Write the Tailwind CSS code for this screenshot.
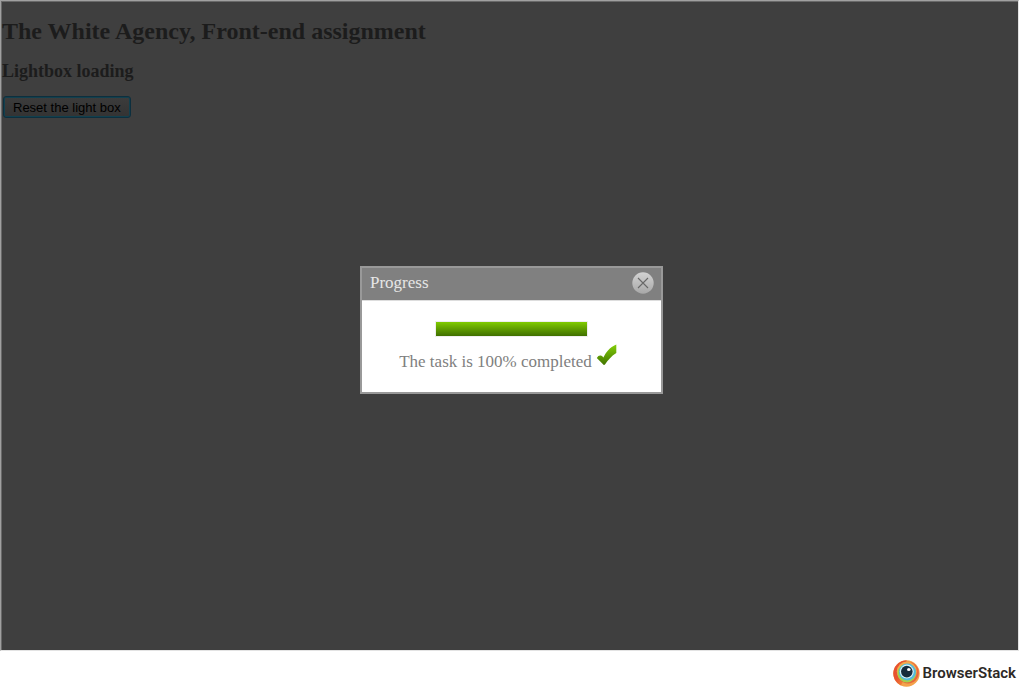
<!DOCTYPE html>
<html lang="en">
<head>
<meta charset="utf-8">
<title>The White Agency, Front-end assignment</title>
<script src="https://cdn.jsdelivr.net/npm/@tailwindcss/browser@4"></script>
</head>
<body class="flex min-h-screen flex-col bg-white font-['Liberation_Serif',serif]">
<div class="relative mr-px flex flex-1 flex-col border border-[#a0a0a0] border-r-[#e3e3e3] border-b-[#e3e3e3] bg-[#3f3f3f]">
  <main class="flex-1 border-t border-l border-[#696969] pt-[15px] text-[#1c1c1c]">
    <h1 class="text-2xl leading-7 font-bold">The White Agency, Front-end assignment</h1>
    <h2 class="mt-4 text-lg leading-5 font-bold">Lightbox loading</h2>
    <button type="button" class="mt-[15px] ml-px h-[22px] rounded-[3px] border border-[#0d2f3e] bg-linear-to-b from-[#3c3c3c] to-[#333333] px-[9px] pt-px font-['Liberation_Sans',sans-serif] text-[13px] leading-4 text-black shadow-[inset_0_0_0_1px_#12404e]">Reset the light box</button>
  </main>
  <div class="absolute inset-0 flex items-center justify-center pt-[9px] pl-1">
    <section role="dialog" aria-labelledby="dialog-title" class="w-[303px] border-2 border-[#999999] bg-white">
      <header class="flex h-[33px] items-center justify-between border-b border-[#dddddd] bg-[#808080] px-2 pb-[2px]">
        <h2 id="dialog-title" class="text-[17px] leading-5 text-[#e6e6e6]">Progress</h2>
        <button type="button" aria-label="Close" class="-mr-px">
          <svg class="block size-[22px]" viewBox="0 0 22 22" fill="none">
            <defs><linearGradient id="close-face" x1="0" y1="0" x2="0" y2="1"><stop stop-color="#d2d2d2"/><stop offset="1" stop-color="#a8a8a8"/></linearGradient></defs>
            <circle cx="11" cy="11" r="10.7" fill="url(#close-face)"/>
            <path d="M6 6l10 10M16 6L6 16" stroke="#686868" stroke-width="1.1"/>
          </svg>
        </button>
      </header>
      <div class="flex flex-col items-center pt-5 pb-5">
        <div role="progressbar" aria-label="Task progress" aria-valuenow="100" aria-valuemin="0" aria-valuemax="100" class="h-4 w-[153px] border border-[#eeeeee]">
          <div class="h-full bg-linear-to-b from-[#80cc00] to-[#407000]" style="width:100%"></div>
        </div>
        <p class="mt-[7px] flex items-start gap-1 text-[17px] leading-5 text-[#808080]">
          <span class="pt-2">The task is 100% completed</span>
          <svg class="mr-[6px] size-[22px]" viewBox="0 0 22 22" aria-hidden="true">
            <defs><linearGradient id="tick-face" x1="0" y1="0" x2="0" y2="1"><stop stop-color="#83cf08"/><stop offset="1" stop-color="#427400"/></linearGradient></defs>
            <path d="M.8 14q1.7-2.8 3.8-2.4 1.5.2 2.8 2C9.8 8.6 13.5 3.6 20.3.6v8.5C15 12.4 12 16.3 9 20.6Q7.8 21.6 6.8 20Z" fill="url(#tick-face)"/>
          </svg>
        </p>
      </div>
    </section>
  </div>
</div>
<footer class="flex h-[41px] items-center justify-end gap-[3px] pt-[3px] pr-1">
  <svg class="size-[27px]" viewBox="0 0 27 27" aria-hidden="true">
    <defs>
      <linearGradient id="logo-rim" x1="0" y1="0" x2="1" y2="1"><stop stop-color="#e64c32"/><stop offset=".5" stop-color="#e85530"/><stop offset="1" stop-color="#f3a33b"/></linearGradient>
    </defs>
    <circle cx="13.5" cy="13.5" r="13.2" fill="#f3a24a"/>
    <path d="M13.5.3A13.2 13.2 0 0 0 8 25.5L14 13Z" fill="url(#logo-rim)"/>
    <circle cx="15" cy="12.6" r="10.8" fill="#e8643c"/>
    <circle cx="13.8" cy="11.6" r="10" fill="#f5a94c"/>
    <circle cx="13.8" cy="13.2" r="9.3" fill="#a5cf4b"/>
    <circle cx="14.4" cy="12" r="8.5" fill="#53b9dc"/>
    <circle cx="13.8" cy="11.6" r="7" fill="#d9f1f6"/>
    <circle cx="13.8" cy="11.6" r="5.8" fill="#172b3c"/>
    <ellipse cx="15.8" cy="9.4" rx="1.8" ry="1.5" fill="#ffffff"/>
  </svg>
  <span class="font-[Roboto,sans-serif] text-[15px] leading-5 font-semibold text-[#2d2926]">BrowserStack</span>
</footer>
</body>
</html>
